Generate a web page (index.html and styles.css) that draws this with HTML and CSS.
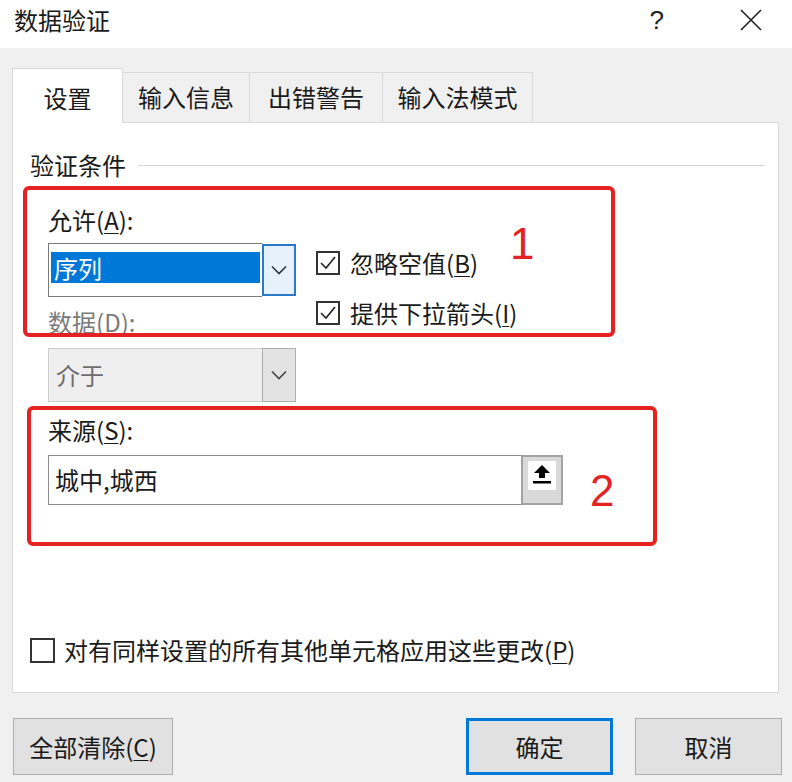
FILE: index.html
```html
<!DOCTYPE html>
<html lang="zh-CN">

<head>
  <meta charset="UTF-8">
  <meta name="viewport" content="width=device-width, initial-scale=1.0">
  <title>数据验证</title>
  <link rel="stylesheet" href="styles.css">
</head>

<body>
  <div class="dialog">
    <div class="titlebar">
      <span class="title">数据验证</span>
      <span class="help">?</span>
      <svg class="close" width="22" height="22" viewBox="0 0 22 22">
        <path d="M1 1 L21 21 M21 1 L1 21" stroke="#222" stroke-width="1.6" fill="none" />
      </svg>
    </div>

    <div class="tabs">
      <div class="tab active">设置</div>
      <div class="tab t2">输入信息</div>
      <div class="tab t3">出错警告</div>
      <div class="tab t4">输入法模式</div>
    </div>

    <div class="panel">
      <div class="legend">
        <span>验证条件</span>
        <i class="rule"></i>
      </div>

      <div class="criteria">
        <div class="left-col">
          <div class="label">允许(<u>A</u>):</div>
          <div class="combo">
            <div class="combo-value"><span class="selected">序列</span></div>
            <div class="combo-btn focus">
              <svg width="16" height="10" viewBox="0 0 16 10">
                <path d="M1 1.5 L8 8.5 L15 1.5" stroke="#333" stroke-width="1.6" fill="none" />
              </svg>
            </div>
          </div>
          <div class="label disabled">数据(<u>D</u>):</div>
          <div class="combo off">
            <div class="combo-value">介于</div>
            <div class="combo-btn">
              <svg width="16" height="10" viewBox="0 0 16 10">
                <path d="M1 1.5 L8 8.5 L15 1.5" stroke="#444" stroke-width="1.6" fill="none" />
              </svg>
            </div>
          </div>
        </div>

        <div class="right-col">
          <div class="check">
            <span class="box">
              <svg width="20" height="20" viewBox="0 0 20 20">
                <path d="M3 10 L8 15 L17 4" stroke="#222" stroke-width="1.6" fill="none" />
              </svg>
            </span>
            <span>忽略空值(<u>B</u>)</span>
          </div>
          <div class="check">
            <span class="box">
              <svg width="20" height="20" viewBox="0 0 20 20">
                <path d="M3 10 L8 15 L17 4" stroke="#222" stroke-width="1.6" fill="none" />
              </svg>
            </span>
            <span>提供下拉箭头(<u>I</u>)</span>
          </div>
        </div>
      </div>

      <div class="label source-label">来源(<u>S</u>):</div>
      <div class="source">
        <div class="source-input">城中,城西</div>
        <div class="source-btn">
          <span class="source-icon">
            <svg width="22" height="24" viewBox="0 0 22 24">
              <path d="M11 3 L3 11 H8 V16 H14 V11 H19 Z" fill="#000" />
              <rect x="2" y="19" width="18" height="2.5" fill="#000" />
            </svg>
          </span>
        </div>
      </div>

      <div class="check apply">
        <span class="box"></span>
        <span>对有同样设置的所有其他单元格应用这些更改(<u>P</u>)</span>
      </div>
    </div>

    <div class="buttons">
      <div class="btn clear">全部清除(<u>C</u>)</div>
      <div class="btn ok">确定</div>
      <div class="btn cancel">取消</div>
    </div>

    <!-- red annotation boxes drawn over the dialog -->
    <div class="mark mark-1"><span class="num">1</span></div>
    <div class="mark mark-2"><span class="num">2</span></div>
  </div>
</body>

</html>
```

FILE: styles.css
```css
body {
  margin: 0;
}

.dialog {
  position: relative;
  width: 792px;
  height: 782px;
  background-color: #f0f0f0;
  font-family: "Noto Sans CJK SC", "Noto Sans", sans-serif;
  font-size: 24px;
  color: #1a1a1a;
  overflow: hidden;
}

u {
  text-decoration-thickness: 1px;
  text-underline-offset: 3px;
}

.titlebar {
  display: flex;
  align-items: flex-start;
  height: 48px;
  box-sizing: border-box;
  padding: 4px 30px 0 14px;
  background-color: #fff;
  line-height: 32px;
}

.help {
  margin-left: auto;
  margin-right: 76px;
  font-family: "Liberation Sans", sans-serif;
  font-size: 26px;
  color: #222;
}

.close {
  margin-top: 5px;
}

.tabs {
  display: flex;
  align-items: flex-end;
  height: 54px;
  margin: 20px 0 0 12px;
}

.tab {
  height: 50px;
  box-sizing: border-box;
  border-top: 1px solid #d9d9d9;
  border-right: 1px solid #d9d9d9;
  background-color: #f0f0f0;
  line-height: 48px;
  text-align: center;
}

.tab.active {
  position: relative;
  z-index: 1;
  width: 111px;
  height: 55px;
  margin-bottom: -1px;
  padding-top: 5px;
  border-left: 1px solid #d9d9d9;
  background-color: #fff;
}

.t2 {
  width: 127px;
}

.t3 {
  width: 133px;
}

.t4 {
  width: 150px;
}

.panel {
  display: flex;
  flex-direction: column;
  height: 571px;
  box-sizing: border-box;
  margin: 0 13px 0 12px;
  padding: 26px 13px 26px 17px;
  border: 1px solid #d9d9d9;
  background-color: #fff;
}

.legend {
  display: flex;
  align-items: center;
  line-height: 32px;
}

.rule {
  flex: 1;
  height: 1px;
  margin-left: 12px;
  background-color: #d5d5d5;
}

.label {
  line-height: 32px;
}

.label.disabled {
  color: #7a7a7a;
}

.criteria {
  display: flex;
  margin: 23px 0 0 18px;
}

.left-col {
  width: 248px;
}

.combo {
  display: flex;
  height: 54px;
  margin: 7px 0 9px;
}

.combo.off {
  margin: 10px 0 0;
}

.combo-value {
  flex: 1;
  box-sizing: border-box;
  padding: 8px 2px;
  border: 1px solid #7a7a7a;
  border-right: none;
}

.selected {
  display: block;
  padding-left: 3px;
  line-height: 31px;
  background-color: #0078d7;
  color: #fff;
}

.combo-btn {
  display: flex;
  align-items: center;
  justify-content: center;
  width: 34px;
  box-sizing: border-box;
  border: 1px solid #7a7a7a;
}

.combo-btn.focus {
  margin: 1px 0;
  border: 2px solid #2b78c8;
  background-color: #e5f1fb;
}

.combo.off .combo-value {
  padding: 0 7px;
  line-height: 52px;
  border-color: #cccccc;
  background-color: #efefef;
  color: #6d6d6d;
}

.combo.off .combo-btn {
  border-color: #adadad;
  background-color: #e3e3e3;
}

.right-col {
  display: flex;
  flex-direction: column;
  gap: 18px;
  margin-left: 20px;
  padding-top: 43px;
}

.check {
  display: flex;
  align-items: center;
  gap: 10px;
  line-height: 32px;
}

.box {
  display: flex;
  align-items: center;
  justify-content: center;
  width: 24px;
  height: 24px;
  box-sizing: border-box;
  border: 2px solid #333;
  background-color: #fff;
}

.source-label {
  margin: 12px 0 0 18px;
}

.source {
  display: flex;
  height: 50px;
  margin: 9px 0 0 18px;
}

.source-input {
  width: 473px;
  box-sizing: border-box;
  padding: 0 6px;
  border: 1px solid #8c8c8c;
  border-right: none;
  line-height: 48px;
}

.source-btn {
  width: 42px;
  box-sizing: border-box;
  padding: 4px 5px;
  border: 2px solid #a3a3a3;
  background-color: #d9d9d9;
}

.source-icon {
  display: flex;
  justify-content: center;
  height: 28px;
  padding-top: 1px;
  border-radius: 2px;
  background-color: #fff;
}

.apply {
  margin-top: auto;
  gap: 9px;
}

.apply .box {
  width: 25px;
  height: 25px;
}

.buttons {
  display: flex;
  gap: 22px;
  margin-top: 25px;
  padding: 0 10px 0 13px;
}

.btn {
  display: flex;
  align-items: center;
  justify-content: center;
  width: 147px;
  height: 57px;
  box-sizing: border-box;
  border: 1px solid #adadad;
  background-color: #e1e1e1;
}

.btn.clear {
  width: 160px;
  margin-right: auto;
}

.btn.ok {
  border: 3px solid #0078d7;
}

.mark {
  position: absolute;
  box-sizing: border-box;
  border: 4px solid #e42222;
  border-radius: 6px;
}

.mark-1 {
  left: 23px;
  top: 186px;
  width: 592px;
  height: 151px;
}

.mark-2 {
  left: 27px;
  top: 406px;
  width: 630px;
  height: 140px;
}

.num {
  position: absolute;
  font-family: "Liberation Sans", sans-serif;
  font-size: 44px;
  line-height: 44px;
  color: #e42222;
}

.mark-1 .num {
  left: 483px;
  top: 32px;
}

.mark-2 .num {
  left: 559px;
  top: 59px;
}
```
